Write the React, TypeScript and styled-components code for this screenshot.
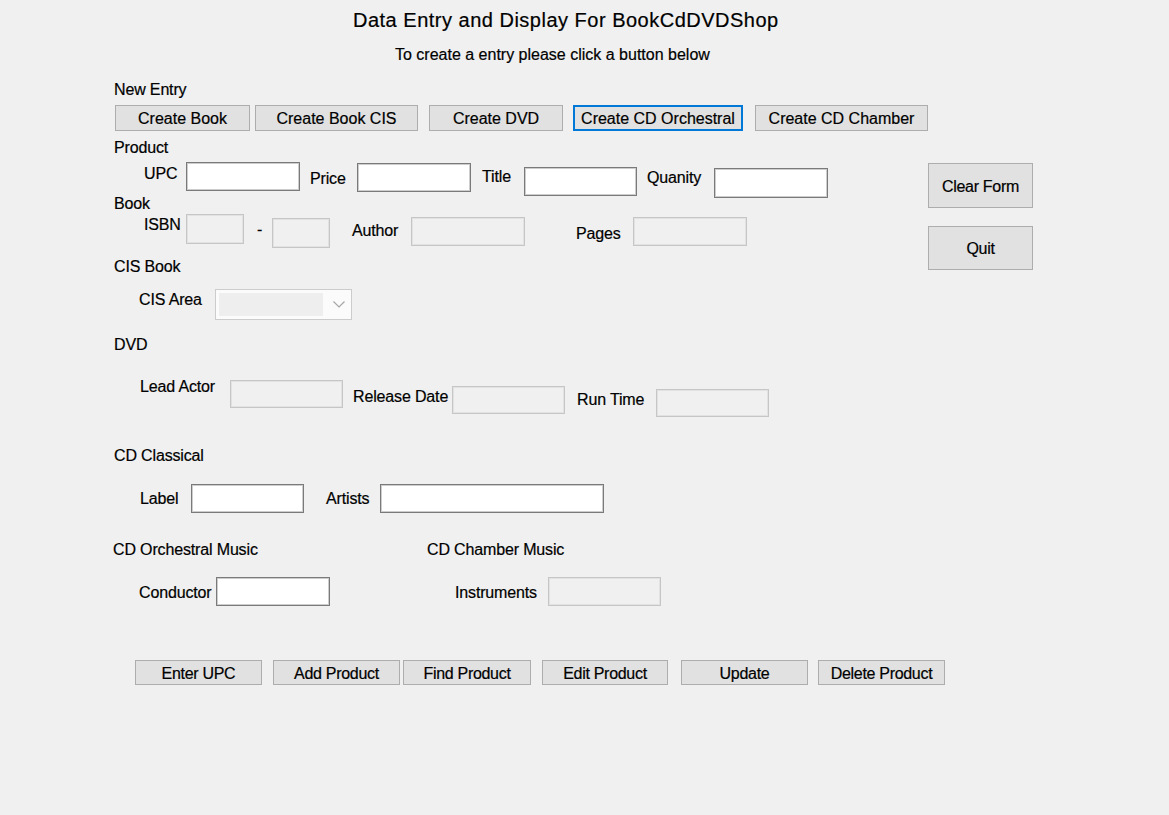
import React from "react";
import styled, { createGlobalStyle, css } from "styled-components";

const GlobalStyle = createGlobalStyle`
  html, body {
    margin: 0;
    padding: 0;
    background: #f0f0f0;
  }
  body {
    font-family: "Liberation Sans", Arial, sans-serif;
  }
`;

const Window = styled.div`
  width: 1169px;
  height: 815px;
  background: #f0f0f0;
  color: #000;
  font-family: "Liberation Sans", Arial, sans-serif;
  font-size: 16px;
  line-height: 18px;
  overflow: hidden;
  -webkit-text-stroke: 0.2px #000;
`;

const Row = styled.div<{ $h: number }>`
  display: flex;
  align-items: flex-start;
  height: ${(p) => p.$h}px;
`;

const Title = styled.h1`
  margin: 8px 0 0 353px;
  font-size: 20px;
  line-height: 24px;
  font-weight: normal;
  letter-spacing: 0.5px;
  white-space: nowrap;
`;

const Subtitle = styled.p`
  margin: 10px 0 0 395px;
  font-size: 16px;
  line-height: 18px;
  white-space: nowrap;
`;

type Place = { $ml?: number; $mt?: number; $w?: number; $h?: number };

const Text = styled.span<Place>`
  display: block;
  flex: none;
  white-space: nowrap;
  margin-left: ${(p) => p.$ml ?? 0}px;
  margin-top: ${(p) => p.$mt ?? 0}px;
  width: ${(p) => (p.$w ? `${p.$w}px` : "auto")};
  letter-spacing: -0.15px;
`;

const Heading = styled(Text)`
  margin-left: ${(p) => p.$ml ?? 114}px;
`;

const Field = styled.input<Place>`
  flex: none;
  display: block;
  box-sizing: border-box;
  width: ${(p) => p.$w ?? 114}px;
  height: ${(p) => p.$h ?? 29}px;
  margin: ${(p) => p.$mt ?? 0}px 0 0 ${(p) => p.$ml ?? 0}px;
  padding: 0 3px;
  font: inherit;
  background: #ffffff;
  border: 1px solid #7a7a7a;
  box-shadow: inset 0 0 0 1px #cdcdcd;
  outline: none;
  border-radius: 0;

  &:disabled {
    background: #f0f0f0;
    border-color: #c6c6c6;
    box-shadow: inset 0 0 0 1px #e2e2e2;
  }
`;

const Btn = styled.button<Place & { $focused?: boolean }>`
  flex: none;
  display: block;
  box-sizing: border-box;
  width: ${(p) => p.$w ?? 127}px;
  height: ${(p) => p.$h ?? 26}px;
  margin: ${(p) => p.$mt ?? 0}px 0 0 ${(p) => p.$ml ?? 0}px;
  padding: 2px 0 0;
  font-family: "Liberation Sans", Arial, sans-serif;
  font-size: 16px;
  line-height: 18px;
  color: #000;
  -webkit-text-stroke: 0.2px #000;
  white-space: nowrap;
  background: #e1e1e1;
  border: 1px solid #adadad;
  border-radius: 0;
  cursor: default;
  ${(p) =>
    p.$focused &&
    css`
      border: 2px solid #0078d7;
      padding-top: 1px;
    `}
`;

const Main = styled.div`
  display: flex;
  align-items: flex-start;
`;

const LeftColumn = styled.div`
  flex: none;
  width: 928px;
`;

const SideButtons = styled.div`
  flex: none;
  display: flex;
  flex-direction: column;
  gap: 18px;
  padding-top: 3px;
`;

const SideBtn = styled(Btn)`
  letter-spacing: -0.3px;
`;

const BottomBtn = styled(Btn)`
  letter-spacing: -0.3px;
`;

const Combo = styled.div<Place>`
  flex: none;
  box-sizing: border-box;
  display: flex;
  align-items: center;
  width: 137px;
  height: 31px;
  margin: ${(p) => p.$mt ?? 0}px 0 0 ${(p) => p.$ml ?? 0}px;
  padding: 3px;
  background: #fbfbfb;
  border: 1px solid #cccccc;
`;

const ComboValue = styled.div`
  width: 104px;
  height: 23px;
  background: #eeeeee;
`;

const Chevron = styled.svg`
  display: block;
  margin-left: 10px;
`;

export default function App() {
  return (
    <Window>
      <GlobalStyle />
      <Row $h={36}>
        <Title>Data Entry and Display For BookCdDVDShop</Title>
      </Row>
      <Row $h={40}>
        <Subtitle>To create a entry please click a button below</Subtitle>
      </Row>
      <Row $h={26}>
        <Heading $mt={5}>New Entry</Heading>
      </Row>
      <Row $h={34}>
        <Btn $ml={115} $mt={3} $w={135}>Create Book</Btn>
        <Btn $ml={5} $mt={3} $w={163}>Create Book CIS</Btn>
        <Btn $ml={11} $mt={3} $w={134}>Create DVD</Btn>
        <Btn $ml={10} $mt={3} $w={170} $focused>
          Create CD Orchestral
        </Btn>
        <Btn $ml={12} $mt={3} $w={173}>Create CD Chamber</Btn>
      </Row>
      <Row $h={24}>
        <Heading $mt={3}>Product</Heading>
      </Row>
      <Main>
        <LeftColumn>
          <Row $h={32}>
            <Text $ml={144} $w={42} $mt={5}>UPC</Text>
            <Field $mt={2} />
            <Text $ml={10} $w={47} $mt={10}>Price</Text>
            <Field $mt={3} />
            <Text $ml={11} $w={42} $mt={8}>Title</Text>
            <Field $mt={7} $w={113} />
            <Text $ml={10} $w={67} $mt={9}>Quanity</Text>
            <Field $mt={8} $h={30} />
          </Row>
          <Row $h={20}>
            <Heading $mt={3}>Book</Heading>
          </Row>
          <Row $h={40}>
            <Text $ml={144} $w={42} $mt={4}>ISBN</Text>
            <Field $mt={2} $w={58} $h={30} disabled />
            <Text $ml={13} $w={15} $mt={9}>-</Text>
            <Field $mt={6} $w={58} $h={30} disabled />
            <Text $ml={22} $w={59} $mt={10}>Author</Text>
            <Field $mt={5} disabled />
            <Text $ml={51} $w={57} $mt={13}>Pages</Text>
            <Field $mt={5} disabled />
          </Row>
          <Row $h={30}>
            <Heading $mt={6}>CIS Book</Heading>
          </Row>
          <Row $h={44}>
            <Text $ml={139} $w={76} $mt={9}>CIS Area</Text>
            <Combo $mt={7}>
              <ComboValue />
              <Chevron width="12" height="7" viewBox="0 0 12 7">
                <polyline
                  points="0.5,0.5 6,6 11.5,0.5"
                  fill="none"
                  stroke="#a6a6a6"
                  strokeWidth="1.2"
                />
              </Chevron>
            </Combo>
          </Row>
          <Row $h={44}>
            <Heading $mt={10}>DVD</Heading>
          </Row>
          <Row $h={70}>
            <Text $ml={140} $w={90} $mt={8}>Lead Actor</Text>
            <Field $mt={10} $w={113} $h={28} disabled />
            <Text $ml={10} $w={99} $mt={18}>Release Date</Text>
            <Field $mt={16} $w={113} $h={28} disabled />
            <Text $ml={12} $w={79} $mt={21}>Run Time</Text>
            <Field $mt={19} $w={113} $h={28} disabled />
          </Row>
          <Row $h={40}>
            <Heading $mt={7}>CD Classical</Heading>
          </Row>
          <Row $h={55}>
            <Text $ml={140} $w={51} $mt={10}>Label</Text>
            <Field $mt={4} $w={113} />
            <Text $ml={22} $w={54} $mt={10}>Artists</Text>
            <Field $mt={4} $w={224} />
          </Row>
          <Row $h={40}>
            <Heading $ml={113} $w={314} $mt={6}>CD Orchestral Music</Heading>
            <Text $mt={6}>CD Chamber Music</Text>
          </Row>
          <Row $h={85}>
            <Text $ml={139} $w={77} $mt={9}>Conductor</Text>
            <Field $mt={2} />
            <Text $ml={125} $w={93} $mt={9}>Instruments</Text>
            <Field $mt={2} $w={113} disabled />
          </Row>
        </LeftColumn>
        <SideButtons>
          <SideBtn $w={105} $h={45}>Clear Form</SideBtn>
          <SideBtn $w={105} $h={44}>Quit</SideBtn>
        </SideButtons>
      </Main>
      <Row $h={40}>
        <BottomBtn $ml={135} $h={25}>Enter UPC</BottomBtn>
        <BottomBtn $ml={11} $h={25}>Add Product</BottomBtn>
        <BottomBtn $ml={3} $w={128} $h={25}>Find Product</BottomBtn>
        <BottomBtn $ml={11} $w={126} $h={25}>Edit Product</BottomBtn>
        <BottomBtn $ml={13} $h={25}>Update</BottomBtn>
        <BottomBtn $ml={10} $h={25}>Delete Product</BottomBtn>
      </Row>
    </Window>
  );
}
